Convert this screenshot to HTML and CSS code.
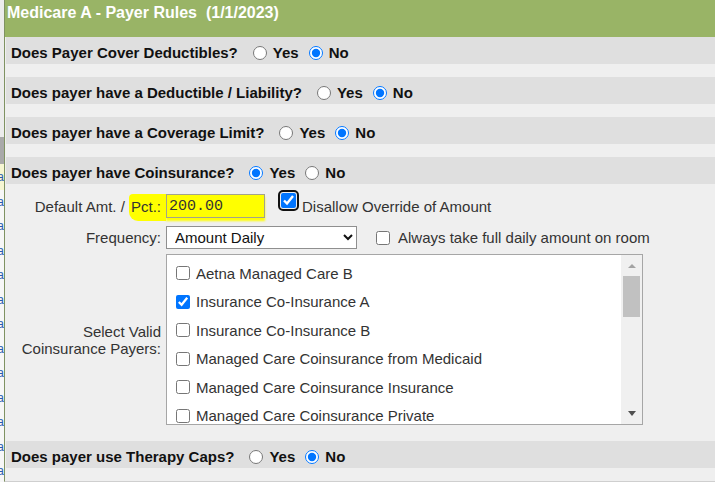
FILE: index.html
```html
<!DOCTYPE html>
<html lang="en">
<head>
    <meta charset="UTF-8">
    <title>Medicare A - Payer Rules</title>
    <link rel="stylesheet" href="styles.css">
</head>
<body>
    <div id="page">
        <div id="edge">
            <div class="edge-a">a</div>
            <div class="edge-a">a</div>
            <div class="edge-a">a</div>
            <div class="edge-a">a</div>
            <div class="edge-a">a</div>
            <div class="edge-a">a</div>
            <div class="edge-a">a</div>
            <div class="edge-a">a</div>
            <div class="edge-a">a</div>
            <div class="edge-a">a</div>
            <div class="edge-a">a</div>
            <div class="edge-a">a</div>
            <div class="edge-a">a</div>
        </div>
        <div id="panel">
            <div id="title">Medicare A - Payer Rules&nbsp; (1/1/2023)</div>

            <div class="question">
                <span class="q-text">Does Payer Cover Deductibles?</span>
                <input type="radio" name="ded" id="ded_y"><label for="ded_y">Yes</label>
                <input type="radio" name="ded" id="ded_n" checked><label for="ded_n">No</label>
            </div>
            <div class="question">
                <span class="q-text">Does payer have a Deductible / Liability?</span>
                <input type="radio" name="liab" id="liab_y"><label for="liab_y">Yes</label>
                <input type="radio" name="liab" id="liab_n" checked><label for="liab_n">No</label>
            </div>
            <div class="question">
                <span class="q-text">Does payer have a Coverage Limit?</span>
                <input type="radio" name="limit" id="limit_y"><label for="limit_y">Yes</label>
                <input type="radio" name="limit" id="limit_n" checked><label for="limit_n">No</label>
            </div>
            <div class="question open">
                <span class="q-text">Does payer have Coinsurance?</span>
                <input type="radio" name="coins" id="coins_y" checked><label for="coins_y">Yes</label>
                <input type="radio" name="coins" id="coins_n"><label for="coins_n">No</label>
            </div>

            <div class="details">
                <div class="field">
                    <div class="f-label">Default Amt. / <span class="marker">Pct.:</span></div>
                    <div class="f-ctrl">
                        <input type="text" class="amt" value="200.00">
                        <span class="ring"><input type="checkbox" id="disallow" checked></span>
                        <label for="disallow" class="tight">Disallow Override of Amount</label>
                    </div>
                </div>
                <div class="field freq-row">
                    <div class="f-label">Frequency:</div>
                    <div class="f-ctrl">
                        <select class="freq">
                            <option>Amount Daily</option>
                            <option>Amount Per Stay</option>
                            <option>Percent</option>
                        </select>
                        <input type="checkbox" id="fullday" class="room">
                        <label for="fullday" class="wide">Always take full daily amount on room</label>
                    </div>
                </div>
                <div class="field payer-row">
                    <div class="f-label">Select Valid<br>Coinsurance Payers:</div>
                    <div class="payers">
                        <div class="payer-list">
                            <label class="payer"><input type="checkbox">Aetna Managed Care B</label>
                            <label class="payer"><input type="checkbox" checked>Insurance Co-Insurance A</label>
                            <label class="payer"><input type="checkbox">Insurance Co-Insurance B</label>
                            <label class="payer"><input type="checkbox">Managed Care Coinsurance from Medicaid</label>
                            <label class="payer"><input type="checkbox">Managed Care Coinsurance Insurance</label>
                            <label class="payer"><input type="checkbox">Managed Care Coinsurance Private</label>
                            <label class="payer"><input type="checkbox">Medicaid Coinsurance</label>
                        </div>
                        <div class="scroll">
                            <span class="arrow up"></span>
                            <span class="thumb"></span>
                            <span class="arrow down"></span>
                        </div>
                    </div>
                </div>
            </div>

            <div class="question last">
                <span class="q-text">Does payer use Therapy Caps?</span>
                <input type="radio" name="caps" id="caps_y"><label for="caps_y">Yes</label>
                <input type="radio" name="caps" id="caps_n" checked><label for="caps_n">No</label>
            </div>
        </div>
    </div>
</body>
</html>
```

FILE: styles.css
```css
*{
    margin:0;
    padding:0;
    box-sizing:border-box;
}
body{
    width:715px;
    height:482px;
    overflow:hidden;
    background:#efefef;
    font-family:"Liberation Sans", Arial, sans-serif;
    font-size:15px;
}
#page{
    display:flex;
    height:482px;
}

/* strip of the page behind the dialog */
#edge{
    width:4px;
    flex:none;
    overflow:hidden;
    padding-top:165px;
    background:linear-gradient(#ececec 0, #ececec 137px, #a9a9a9 137px, #a9a9a9 164px, #f6f6d2 164px, #f6f6d2 190px, #f7f7f7 190px);
}
.edge-a{
    width:14px;
    margin-left:-10px;
    text-align:right;
    font-size:12px;
    line-height:24.5px;
    color:#2a5db0;
}

#panel{
    flex:1;
    background:#efefef;
    border-left:1px solid #7f9262;
    border-bottom:1px solid #cfcfcf;
}
#title{
    height:37px;
    padding:3px 2px 0;
    background:#99b466;
    color:#fff;
    font-size:16px;
    font-weight:bold;
    line-height:19px;
}

/* yes / no rows */
.question{
    display:flex;
    align-items:center;
    height:27px;
    margin:0 0 13px 1px;
    padding:7px 0 2px 5px;
    background:#dfdfdf;
    color:#111;
    font-weight:bold;
    line-height:18px;
}
.question.open{
    margin-bottom:0;
}
.question input{
    width:14px;
    height:14px;
    margin:0 0 0 10px;
}
.q-text{
    margin-right:5px;
}
.question label{
    margin-left:6px;
}

/* coinsurance block */
.details{
    padding:10px 0 16px;
    color:#333;
}
.field{
    display:flex;
    align-items:center;
    gap:5px;
}
.freq-row{
    margin-top:8px;
}
.payer-row{
    margin-top:5px;
}
.f-label{
    width:156px;
    flex:none;
    text-align:right;
    line-height:17px;
}
.marker{
    background:#ffff00;
    padding:4px 0 6px 2px;
    border-radius:4px 0 0 9px;
    box-shadow:5px 0 0 #ffff00;
}
.f-ctrl{
    display:flex;
    align-items:center;
    line-height:17px;
}
.amt{
    width:99px;
    height:24px;
    padding:0 2px;
    border:1px solid #a3a38c;
    background:#ffff00;
    box-shadow:0 3px 2px #ffff00;
    color:#333;
    font-family:"Liberation Mono", monospace;
    font-size:15px;
    outline:none;
}
/* focused checkbox */
.ring{
    display:flex;
    align-self:flex-start;
    margin:-4px 0 0 13px;
    padding:1px;
    border:2px solid #111;
    border-radius:5px;
}
.ring input{
    width:15px;
    height:15px;
    margin:0;
}
.tight{
    margin-left:3px;
}
.freq{
    width:191px;
    height:23px;
    padding-left:4px;
    font-family:"Liberation Sans", Arial, sans-serif;
    font-size:15px;
    color:#111;
    background:#fff;
    border:1px solid #8f8f8f;
}
.room{
    width:14px;
    height:14px;
    margin-left:19px;
}
.wide{
    margin-left:8px;
}

.payers{
    display:flex;
    width:477px;
    height:171px;
    border:1px solid #a6a6a6;
    background:#fff;
}
.payer-list{
    flex:1;
    overflow:hidden;
    padding:4px 0 0 9px;
}
.payer{
    display:flex;
    align-items:center;
    height:28.5px;
    white-space:nowrap;
}
.payer input{
    width:14px;
    height:14px;
    margin:0 6px 0 0;
}
.scroll{
    width:21px;
    display:flex;
    flex-direction:column;
    align-items:center;
    background:#f0f0f0;
}
.arrow{
    height:21px;
    width:8px;
    display:flex;
    align-items:center;
}
.arrow::before{
    content:"";
    border-left:4px solid transparent;
    border-right:4px solid transparent;
}
.up::before{
    border-bottom:4px solid #a3a3a3;
}
.down{
    margin-top:auto;
}
.down::before{
    border-top:5px solid #505050;
}
.thumb{
    width:17px;
    height:41px;
    background:#c1c1c1;
}
```
